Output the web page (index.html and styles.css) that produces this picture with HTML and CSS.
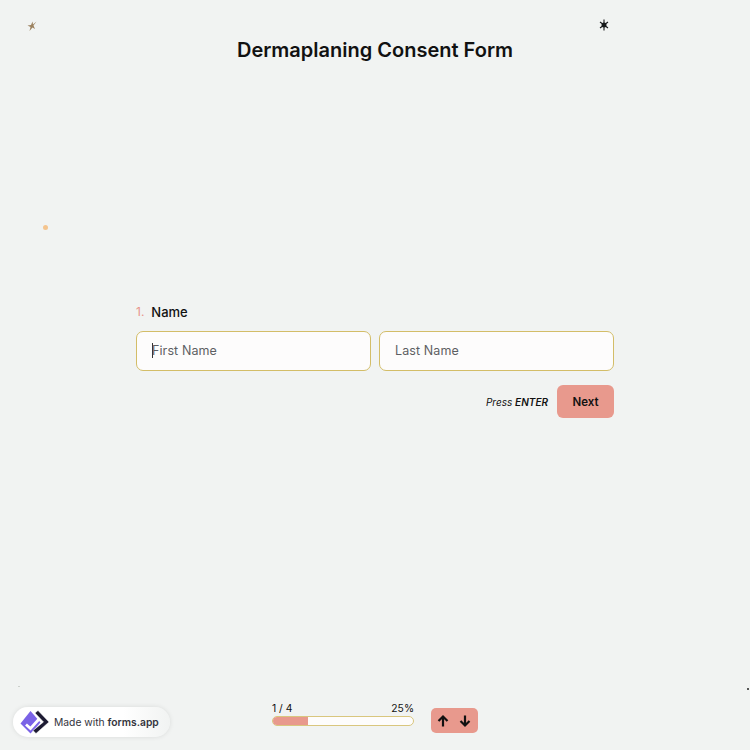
FILE: index.html
```html
<!DOCTYPE html>
<html lang="en">

<head>
  <meta charset="UTF-8">
  <meta name="viewport" content="width=device-width, initial-scale=1.0">
  <title>Dermaplaning Consent Form</title>
  <link rel="stylesheet" href="styles.css">
</head>

<body>
  <div class="page">
    <!-- background specks -->
    <svg class="speck speck-star" width="10" height="10" viewBox="0 0 10 10"><path d="M9.500 .5L6 3.500 5.500 .5 4 4 .5 4.500 3.500 6 2.500 10 5.500 6.500 8 8 6.500 4.500Z" fill="#9c8260"/></svg>
    <svg class="speck speck-asterisk" width="10" height="12" viewBox="0 0 10 12"><path d="M5 .5V11.500M1 3L9 9M9 3L1 9" stroke="#16181a" stroke-width="1.100" fill="none"/><circle cx="5" cy="6" r="2.500" fill="#16181a"/></svg>
    <span class="speck speck-dot"></span>
    <span class="speck speck-tiny"></span>
    <span class="speck speck-faint"></span>

    <h1 class="title">Dermaplaning Consent Form</h1>

    <main class="form">
      <div class="question">
        <span class="number">1.</span>
        <span class="label">Name</span>
      </div>
      <div class="fields">
        <div class="field"><span class="caret"></span><span>First Name</span></div>
        <div class="field"><span>Last Name</span></div>
      </div>
      <div class="actions">
        <span class="hint">Press <b>ENTER</b></span>
        <div class="btn-next">Next</div>
      </div>
    </main>

    <footer class="footer">
      <div class="badge">
        <svg width="30" height="24" viewBox="0 0 30 24">
          <path d="M.5 13.500L10.500 1 20.500 12.500 10.500 23.500Z" fill="#7a62e6"/>
          <path d="M6 14.500L10.500 18.500 20 8" stroke="#fff" stroke-width="2.800" fill="none"/>
          <path d="M18 .5L29 12 16 23.500 13 20.500 23.500 12 15 3Z" fill="#1d1b33" stroke="#fff" stroke-width=".5"/>
        </svg>
        <span>Made with <b>forms.app</b></span>
      </div>
      <div class="progress">
        <div class="progress-text">
          <span>1 / 4</span>
          <span>25%</span>
        </div>
        <div class="progress-bar">
          <div class="progress-fill" style="width: 25%"></div>
        </div>
      </div>
      <div class="arrows">
        <svg width="14" height="14" viewBox="0 0 14 14"><path d="M7 12.500V2.500M2.500 7L7 2.500 11.500 7" stroke="#111" stroke-width="2.200" fill="none"/></svg>
        <svg width="14" height="14" viewBox="0 0 14 14"><path d="M7 1.500V11.500M2.500 7L7 11.500 11.500 7" stroke="#111" stroke-width="2.200" fill="none"/></svg>
      </div>
    </footer>
  </div>
</body>

</html>
```

FILE: styles.css
```css
*{
  box-sizing: border-box;
}
body{
  margin: 0;
  background: #f1f3f2;
  font-family: Inter, "Liberation Sans", sans-serif;
  color: #111;
}
.page{
  position: relative;
  height: 750px;
  display: flex;
  flex-direction: column;
  overflow: hidden;
}
.title{
  margin: 0;
  padding-top: 38px;
  height: 304px;
  font-size: 20px;
  line-height: 24px;
  font-weight: 600;
  text-align: center;
}
.speck{
  position: absolute;
}
.speck-star{
  left: 27px;
  top: 21px;
}
.speck-asterisk{
  left: 599px;
  top: 19px;
}
.speck-dot{
  left: 43px;
  top: 225px;
  width: 5px;
  height: 5px;
  border-radius: 50%;
  background: #f4c48e;
}
.speck-tiny{
  left: 747px;
  top: 688px;
  width: 2px;
  height: 2px;
  border-radius: 50%;
  background: #222;
}
.speck-faint{
  left: 18px;
  top: 686px;
  width: 2px;
  height: 1px;
  background: #ccd0cc;
}
.form{
  width: 478px;
  margin-left: 136px;
}
.question{
  display: flex;
  gap: 7px;
  height: 27px;
  font-size: 13px;
  line-height: 16px;
}
.number{
  color: #e8958a;
  font-size: 12px;
}
.label{
  font-weight: 500;
  font-size: 13px;
}
.fields{
  display: flex;
  gap: 8px;
}
.field{
  flex: 1;
  height: 40px;
  display: flex;
  align-items: center;
  padding: 0 0 1px 15px;
  background: #fdfcfc;
  border: 1px solid #d3bd68;
  border-radius: 7px;
  font-size: 12.500px;
  letter-spacing: .1px;
  color: #5d5f63;
}
.caret{
  width: 1px;
  height: 15px;
  margin-right: -1px;
  background: #333;
}
.actions{
  display: flex;
  justify-content: flex-end;
  align-items: center;
  gap: 9px;
  margin-top: 14px;
}
.hint{
  font-size: 10px;
  font-style: italic;
}
.hint b{
  font-weight: 600;
}
.btn-next{
  width: 57px;
  height: 33px;
  display: flex;
  justify-content: center;
  align-items: center;
  background: #e8998d;
  border-radius: 6px;
  font-size: 11.500px;
  font-weight: 600;
}
.footer{
  display: flex;
  align-items: flex-start;
  margin-top: auto;
  padding: 0 0 13px 13px;
}
.badge{
  width: 157px;
  height: 30px;
  display: flex;
  align-items: center;
  gap: 4px;
  padding-left: 7px;
  background: linear-gradient(90deg, #fff 70%, #f1f3f2 100%);
  border-radius: 15px;
  box-shadow: 0 0 5px rgba(0, 0, 0, .1);
  font-size: 10.300px;
  color: #33343c;
}
.badge b{
  font-weight: 600;
}
.progress{
  width: 142px;
  margin-left: 102px;
  margin-top: -5px;
}
.progress-text{
  display: flex;
  justify-content: space-between;
  height: 13px;
  font-size: 10.300px;
  line-height: 13px;
}
.progress-bar{
  height: 10px;
  margin-top: 1px;
  background: #fdfcfc;
  border: 1px solid #d9c67e;
  border-radius: 5px;
  overflow: hidden;
}
.progress-fill{
  height: 100%;
  background: #e8998d;
}
.arrows{
  width: 47px;
  height: 25px;
  margin-left: 17px;
  margin-top: 1px;
  display: flex;
  justify-content: center;
  align-items: center;
  gap: 8px;
  padding-right: 2px;
  background: #e8998d;
  border-radius: 5px;
}
```
